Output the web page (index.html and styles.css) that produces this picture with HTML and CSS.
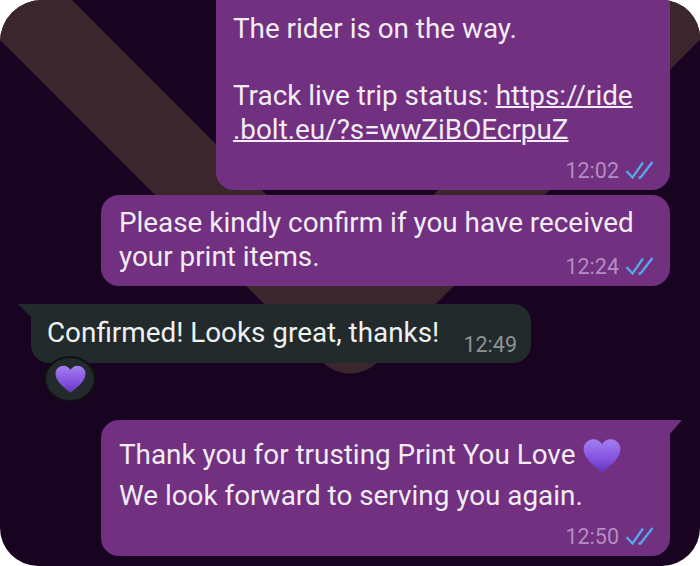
FILE: index.html
```html
<!DOCTYPE html>
<html>
<head>
  <title>chat</title>
  <link rel="stylesheet" href="styles.css">
</head>
<body>
<svg class="defs" width="0" height="0">
  <defs>
    <linearGradient id="heartFill" x1="0" y1="0" x2="0" y2="1">
      <stop offset="0" stop-color="#a47ff0"/>
      <stop offset="0.6" stop-color="#8552e0"/>
      <stop offset="1" stop-color="#6434b8"/>
    </linearGradient>
    <symbol id="heart" viewBox="0 0 32 28">
      <path fill="url(#heartFill)" d="M16 28C10 23.5 .5 16.500 .5 8.500C.5 3.500 4.500 .3 9 .3C12 .3 14.500 2 16 4.500C17.500 2 20 .3 23 .3C27.500 .3 31.500 3.500 31.500 8.500C31.500 16.500 22 23.500 16 28Z"/>
    </symbol>
    <symbol id="ticks" viewBox="0 0 28 18">
      <path fill="none" stroke="#58a6ee" stroke-width="2.300" d="M1 10L7 16.500L17.500 1.500M13 16.500L15 16.500L27 1"/>
    </symbol>
  </defs>
</svg>

<div id="chat">
  <svg class="wallpaper" viewBox="0 0 700 566">
    <polyline points="-50,-66 350,334 750,-66" fill="none" stroke="#3c262e" stroke-width="79" stroke-linejoin="round"/>
  </svg>

  <div class="bubble sent first">
    <p class="text">The rider is on the way.<br><br>Track live trip status: <a href="#">https://ride<br>.bolt.eu/?s=wwZiBOEcrpuZ</a></p>
    <div class="meta"><span>12:02</span><svg class="tick"><use href="#ticks"/></svg></div>
  </div>

  <div class="bubble sent second">
    <p class="text">Please kindly confirm if you have received<br>your print items.</p>
    <div class="meta"><span>12:24</span><svg class="tick"><use href="#ticks"/></svg></div>
  </div>

  <div class="bubble received">
    <p class="text">Confirmed! Looks great, thanks!</p>
    <div class="meta"><span>12:49</span></div>
    <div class="reaction"><svg class="heartSmall"><use href="#heart"/></svg></div>
  </div>

  <div class="bubble sent last">
    <p class="text">Thank you for trusting Print You Love <svg class="heartBig"><use href="#heart"/></svg><br>We look forward to serving you again.</p>
    <div class="meta"><span>12:50</span><svg class="tick"><use href="#ticks"/></svg></div>
  </div>
</div>
</body>
</html>
```

FILE: styles.css
```css
body {
  margin: 0;
  background-color: #fff;
  font-family: Roboto, "Liberation Sans", sans-serif;
}

.defs {
  position: absolute;
}

#chat {
  position: relative;
  width: 700px;
  height: 566px;
  overflow: hidden;
  background-color: #180420;
  border-radius: 42px 38px 38px 38px;
  display: flex;
  flex-direction: column;
  align-items: flex-end;
  padding-right: 30px;
  box-sizing: border-box;
}

.wallpaper {
  position: absolute;
  left: 0;
  top: 0;
  width: 700px;
  height: 566px;
}

.bubble {
  position: relative;
  display: grid;
  box-sizing: border-box;
  border-radius: 18px;
  color: #f3ecf5;
  font-size: 27.850px;
  line-height: 33.500px;
}

.bubble > .text,
.bubble > .meta {
  grid-area: 1 / 1;
}

.sent {
  background-color: #713080;
  padding: 11px 16px 6px 18px;
}

.first {
  width: 454px;
  height: 190px;
  border-radius: 0 0 18px 18px;
  padding-top: 12px;
  padding-left: 17px;
}

.second {
  width: 569px;
  height: 91px;
  margin-top: 5px;
}

.received {
  align-self: flex-start;
  width: 500px;
  height: 59px;
  margin: 18px 0 0 31px;
  padding: 12px 14px 0 16px;
  background-color: #222a2c;
  border-top-left-radius: 0;
  color: #eef1f1;
}

.received::before {
  content: "";
  position: absolute;
  left: -13px;
  top: 0;
  width: 14px;
  height: 14px;
  background-color: #222a2c;
  clip-path: polygon(0 0, 100% 0, 100% 100%);
}

.last {
  width: 569px;
  height: 136px;
  margin-top: 57px;
  border-top-right-radius: 0;
  padding-top: 14px;
  line-height: 41px;
}

.last::before {
  content: "";
  position: absolute;
  right: -12px;
  top: 0;
  width: 13px;
  height: 15px;
  background-color: #713080;
  clip-path: polygon(0 0, 100% 0, 0 100%);
}

.text {
  margin: 0;
}

.text a {
  color: inherit;
  text-decoration: underline;
  text-decoration-thickness: 1.500px;
}

.meta {
  justify-self: end;
  align-self: end;
  display: flex;
  align-items: center;
  gap: 6px;
  font-size: 21.500px;
  line-height: 26px;
  color: #b48dc0;
}

.received .meta {
  color: #8c9395;
  margin-bottom: 5px;
}

.tick {
  width: 29px;
  height: 18px;
  margin-bottom: 3px;
}

.heartBig {
  width: 38px;
  height: 35px;
  vertical-align: -9px;
  margin-left: 1px;
}

.reaction {
  position: absolute;
  left: 14px;
  top: 52px;
  width: 48px;
  height: 42px;
  display: flex;
  align-items: center;
  justify-content: center;
  border-radius: 50%;
  background-color: #222a2c;
  border: 2px solid #111013;
  box-sizing: content-box;
  margin-left: -1px;
}

.heartSmall {
  width: 31px;
  height: 28px;
}
```
